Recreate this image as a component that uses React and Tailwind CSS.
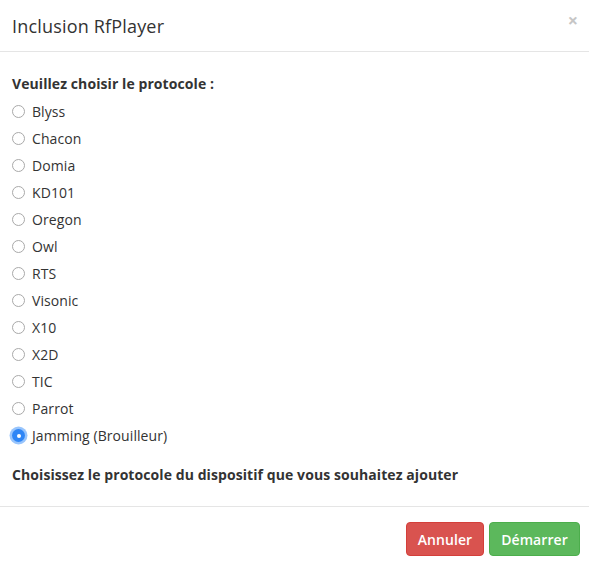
const protocols = [
  "Blyss",
  "Chacon",
  "Domia",
  "KD101",
  "Oregon",
  "Owl",
  "RTS",
  "Visonic",
  "X10",
  "X2D",
  "TIC",
  "Parrot",
  "Jamming (Brouilleur)",
];

export default function App() {
  return (
    <div
      className="w-[589px] h-[566px] bg-white text-[#333] overflow-hidden tracking-[0.005em]"
      style={{ fontFamily: '"Open Sans", "Liberation Sans", sans-serif' }}
    >
      {/* header */}
      <div className="relative h-[52px] flex items-center px-3 border-b border-[#e5e5e5]">
        <h4 className="text-[18px] leading-none tracking-[0.01em]">Inclusion RfPlayer</h4>
        <span className="absolute right-[11px] top-[11px] text-[18px] font-bold text-[#c6c6c6] leading-none">×</span>
      </div>

      {/* body */}
      <div className="px-3 pt-[22px] pb-[21px]">
        <div className="h-5 leading-5 text-[14px] font-bold mb-[4px]">Veuillez choisir le protocole :</div>
        <div className="flex flex-col">
          {protocols.map((p, i) => {
            const checked = i === protocols.length - 1;
            return (
              <label key={p} className="h-[27px] flex items-center gap-[7px] text-[14px]">
                {checked ? (
                  <span className="w-[13px] h-[13px] rounded-full bg-[#2f86f6] flex items-center justify-center shadow-[0_0_0_2.5px_rgba(70,150,250,0.55)]">
                    <span className="w-[4px] h-[4px] rounded-full bg-white" />
                  </span>
                ) : (
                  <span className="w-[13px] h-[13px] rounded-full border border-[#a9a9a9] bg-white" />
                )}
                <span>{p}</span>
              </label>
            );
          })}
        </div>
        <div className="mt-4 h-5 leading-5 text-[14px] font-bold">
          Choisissez le protocole du dispositif que vous souhaitez ajouter
        </div>
      </div>

      {/* footer */}
      <div className="border-t border-[#e5e5e5] pt-[15px] px-[9px] flex justify-end gap-[5px]">
        <button className="h-[34px] w-[78px] rounded-[4px] bg-[#d9534f] border border-[#d43f3a] text-white text-[14px] font-semibold">
          Annuler
        </button>
        <button className="h-[34px] w-[91px] rounded-[4px] bg-[#5cb85c] border border-[#4cae4c] text-white text-[14px] font-semibold">
          Démarrer
        </button>
      </div>
    </div>
  );
}
